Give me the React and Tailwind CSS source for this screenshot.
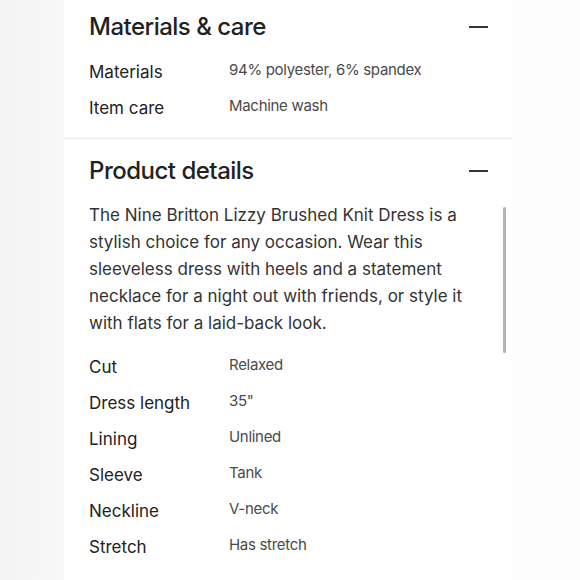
import React from "react";

const care = [
  ["Materials", "94% polyester, 6% spandex"],
  ["Item care", "Machine wash"],
];

const details = [
  ["Cut", "Relaxed"],
  ["Dress length", '35"'],
  ["Lining", "Unlined"],
  ["Sleeve", "Tank"],
  ["Neckline", "V-neck"],
  ["Stretch", "Has stretch"],
];

function Minus() {
  return <div className="w-[19px] h-[2px] bg-[#333]" />;
}

function SpecRow({ label, value }) {
  return (
    <div className="flex items-center h-[36px]">
      <div className="w-[140px] text-[17px] text-[#222]">{label}</div>
      <div className="text-[15px] tracking-[-0.3px] text-[#4a4a4a] -mt-[5px]">{value}</div>
    </div>
  );
}

export default function App() {
  return (
    <div
      className="w-[580px] h-[580px] overflow-hidden flex bg-[#fcfcfc]"
      style={{ fontFamily: "Inter, 'Noto Sans', sans-serif" }}
    >
      <div className="w-[64px] bg-gradient-to-r from-[#f3f3f3] to-[#f8f8f8]" />
      <div className="w-[448px] bg-white flex flex-col">
        <section className="pl-[25px] pr-[24px] pb-[10px] pt-[1px]">
          <div className="flex items-center justify-between h-[52px]">
            <h2 className="text-[24px] font-medium text-[#222] tracking-[-0.5px]">
              Materials &amp; care
            </h2>
            <Minus />
          </div>
          <div className="pt-[2px]">
            {care.map(([l, v]) => (
              <SpecRow key={l} label={l} value={v} />
            ))}
          </div>
        </section>
        <div className="h-[3px] bg-[#f4f4f4]" />
        <section className="pl-[25px] pr-[24px] relative">
          <div className="flex items-center justify-between h-[58px] mt-[2px]">
            <h2 className="text-[24px] font-medium text-[#222] tracking-[-0.5px]">
              Product details
            </h2>
            <Minus />
          </div>
          <p className="text-[17px] leading-[27px] text-[#333] pr-[20px] pt-[2px]">
            The Nine Britton Lizzy Brushed Knit Dress is a stylish choice for
            any occasion. Wear this sleeveless dress with heels and a statement
            necklace for a night out with friends, or style it with flats for a
            laid-back look.
          </p>
          <div className="mt-[13px]">
            {details.map(([l, v]) => (
              <SpecRow key={l} label={l} value={v} />
            ))}
          </div>
          <div className="absolute left-[439px] top-[67px] w-[3px] h-[146px] bg-[#b5b5b5] rounded-full" />
        </section>
      </div>
    </div>
  );
}
